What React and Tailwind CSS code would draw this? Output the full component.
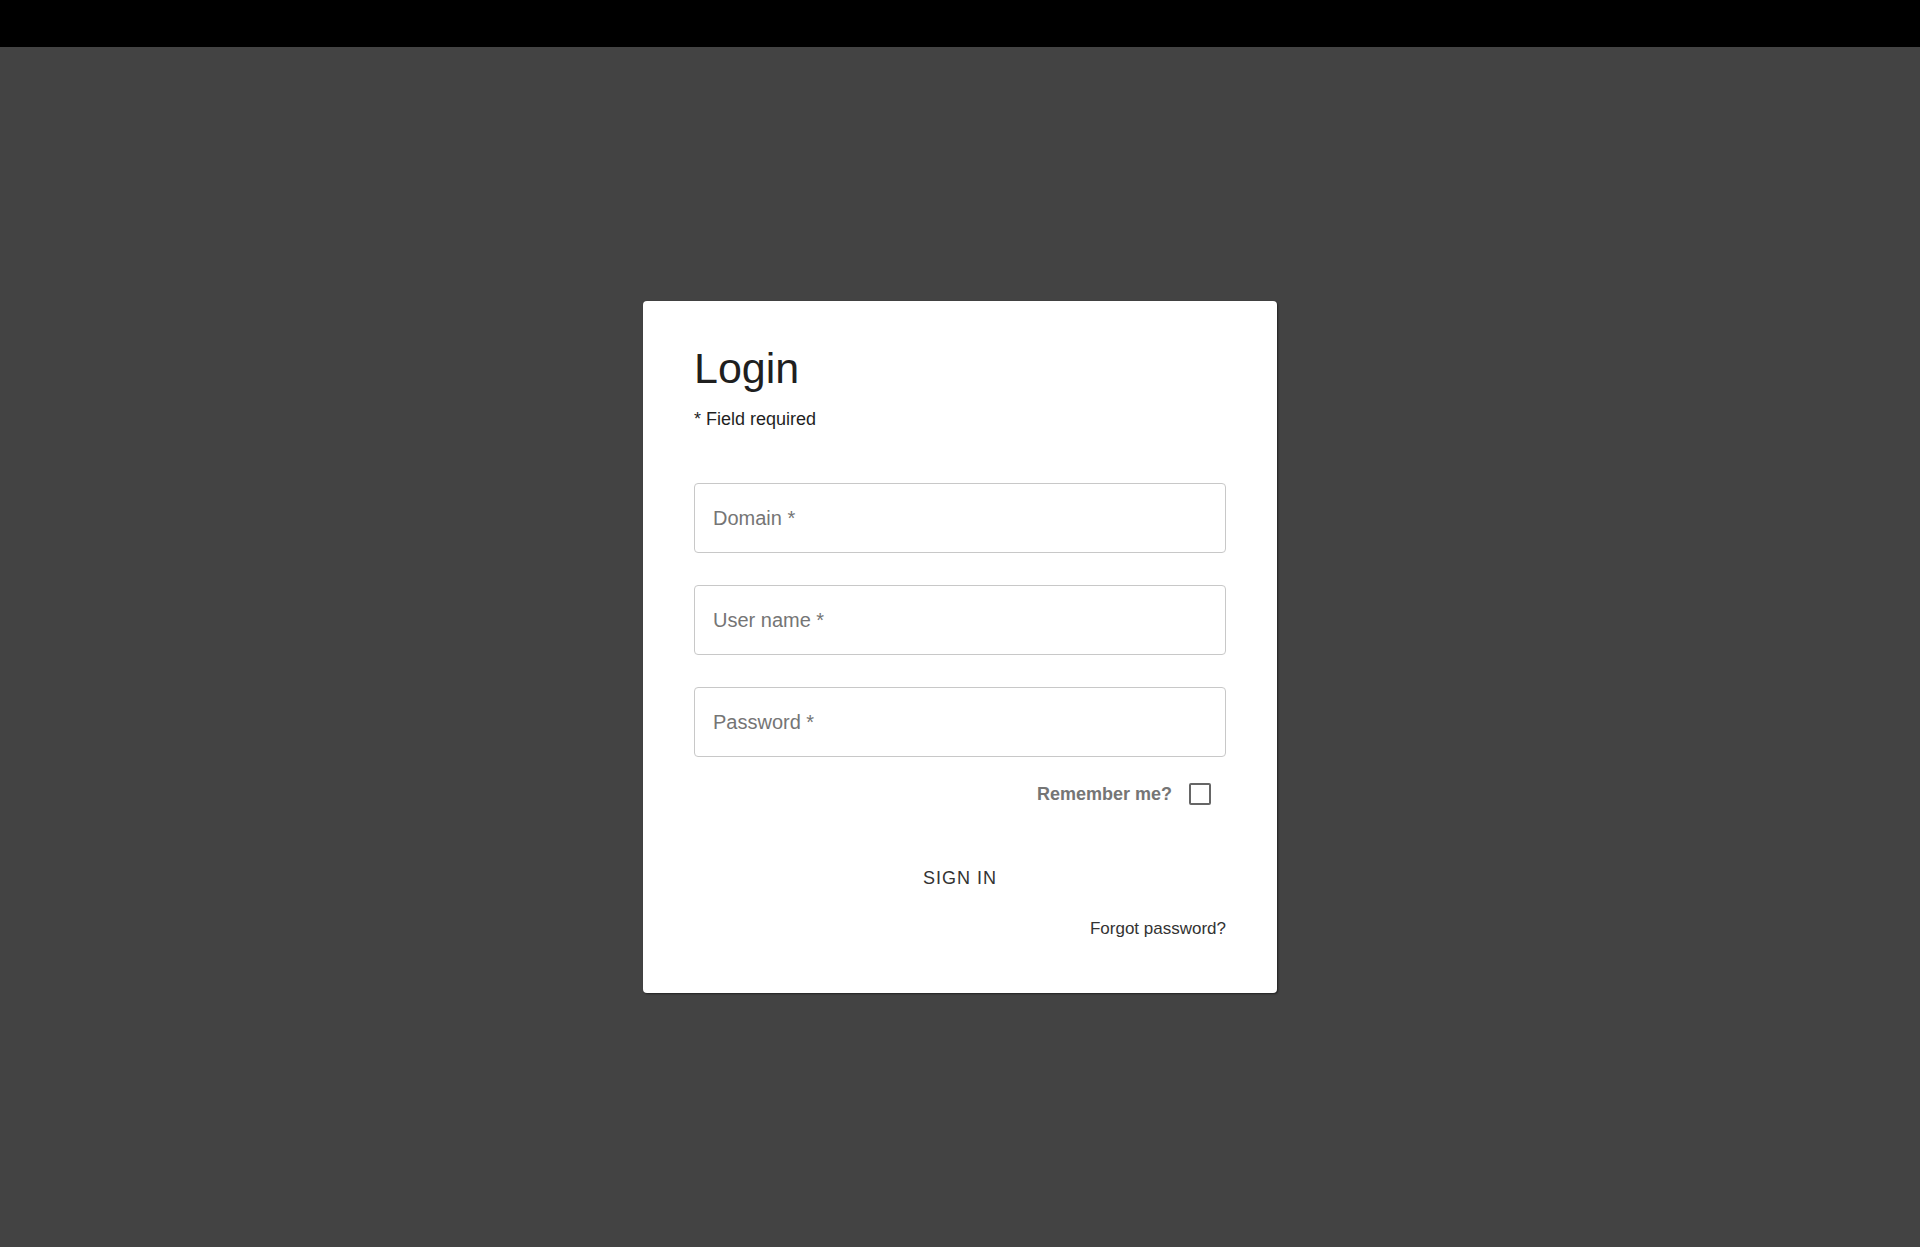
import { useState } from "react";

function Field({ label, type = "text" }) {
  return (
    <input
      type={type}
      placeholder={label}
      className="w-full h-[70px] rounded-[4px] border border-[#c8c8c8] bg-white px-[18px] text-[20px] text-[#222] placeholder-[#757575] outline-none"
    />
  );
}

export default function App() {
  const [remember, setRemember] = useState(false);

  return (
    <div className="min-h-[1247px] flex flex-col bg-[#434343] font-['Liberation_Sans',Arial,sans-serif]">
      {/* top bar */}
      <div className="h-[47px] bg-black shrink-0" />

      <div className="flex-1 flex items-center justify-center">
        {/* card */}
        <div className="w-[634px] bg-white rounded-[4px] shadow-[1px_1px_2px_rgba(0,0,0,0.5)] px-[51px] pt-[43px] pb-[52px]">
          <h1 className="text-[43px] leading-[48px] text-[#1f1f1f]">Login</h1>
          <p className="mt-[15px] text-[18px] leading-[24px] text-[#1f1f1f]">* Field required</p>

          <form className="mt-[52px] flex flex-col gap-[32px]" onSubmit={(e) => e.preventDefault()}>
            <Field label="Domain *" />
            <Field label="User name *" />
            <Field label="Password *" type="password" />
          </form>

          <div className="mt-[26px] flex items-center justify-end pr-[15px]">
            <label className="flex items-center gap-[17px] cursor-pointer">
              <span className="text-[18px] leading-[22px] font-bold text-[#757575]">Remember me?</span>
              <span
                onClick={() => setRemember((r) => !r)}
                className="w-[22px] h-[22px] rounded-[2px] border-2 border-[#666] bg-white"
              />
            </label>
          </div>

          <div className="mt-[53px] flex justify-center">
            <button className="py-[8px] px-4 text-[18px] leading-[24px] tracking-[1px] text-[#333]">SIGN IN</button>
          </div>

          <div className="mt-[19px] flex justify-end">
            <a className="text-[17px] leading-[24px] text-[#333] cursor-pointer">Forgot password?</a>
          </div>
        </div>
      </div>
    </div>
  );
}
